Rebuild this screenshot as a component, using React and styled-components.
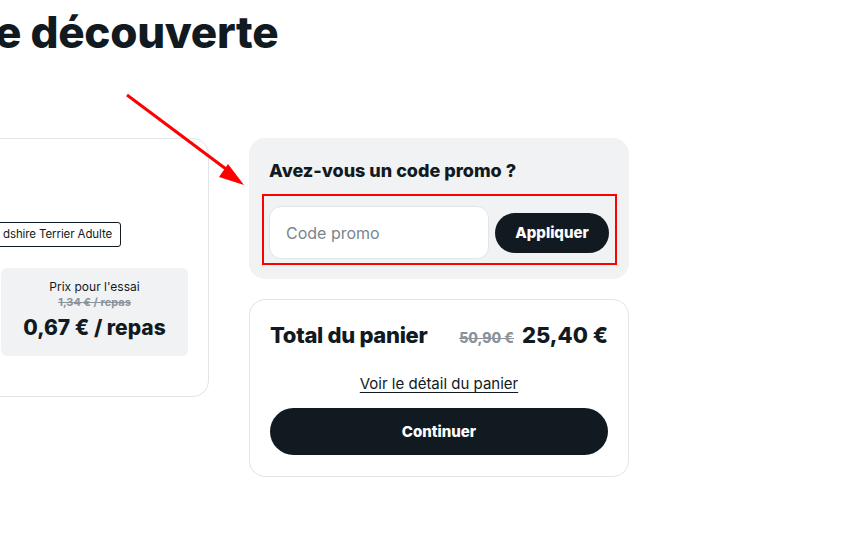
import styled, { createGlobalStyle } from "styled-components"

const GlobalStyle = createGlobalStyle`
    html, body {
        margin: 0;
        padding: 0;
        background: #ffffff;
        overflow: hidden;
    }
    body {
        font-family: "Inter", "Liberation Sans", sans-serif;
        color: #111a21;
    }
`

export default function App() {
    return (
        <>
            <GlobalStyle />
            <Page>
                <Title>e découverte</Title>
                <Columns>
                    <ProductCard>
                        <Tag>dshire Terrier Adulte</Tag>
                        <PriceBox>
                            <PriceLabel>Prix pour l'essai</PriceLabel>
                            <OldMealPrice>1,34 € / repas</OldMealPrice>
                            <MealPrice>0,67 € / repas</MealPrice>
                        </PriceBox>
                    </ProductCard>

                    <Side>
                        <PromoBox>
                            <PromoTitle>Avez-vous un code promo ?</PromoTitle>
                            <Highlight>
                                <PromoRow>
                                    <PromoInput placeholder="Code promo" />
                                    <PillButton $small>Appliquer</PillButton>
                                </PromoRow>
                            </Highlight>
                        </PromoBox>

                        <TotalCard>
                            <TotalRow>
                                <TotalLabel>Total du panier</TotalLabel>
                                <Prices>
                                    <OldTotal>50,90 €</OldTotal>
                                    <Total>25,40 €</Total>
                                </Prices>
                            </TotalRow>
                            <DetailLink href="#">Voir le détail du panier</DetailLink>
                            <PillButton>Continuer</PillButton>
                        </TotalCard>
                    </Side>
                </Columns>
            </Page>

            {/* flèche d'annotation */}
            <Arrow width="844" height="554" viewBox="0 0 844 554">
                <line x1="127" y1="95" x2="230" y2="172" stroke="#ff0000" strokeWidth="3" />
                <polygon points="244,185 228,164 219,177" fill="#ff0000" />
            </Arrow>
        </>
    )
}

const Page = styled.div`
    width: 844px;
    height: 554px;
    position: relative;
`

const Title = styled.h1`
    margin: 0 0 0 -5px;
    padding-top: 4px;
    font-size: 44px;
    line-height: 56px;
    font-weight: 800;
    letter-spacing: -0.3px;
    white-space: nowrap;
`

const Columns = styled.div`
    display: flex;
    align-items: flex-start;
    gap: 40px;
    margin-top: 78px;
`

const ProductCard = styled.div`
    margin-left: -20px;
    width: 187px;
    padding: 83px 20px 40px 20px;
    border: 1px solid #e1e4e8;
    border-radius: 16px;
    display: flex;
    flex-direction: column;
`

const Tag = styled.span`
    align-self: flex-start;
    margin-left: -8px;
    padding: 0 8px 0 9px;
    height: 23px;
    line-height: 23px;
    border: 1px solid #111a21;
    border-radius: 3px;
    font-size: 11.5px;
    letter-spacing: -0.1px;
    white-space: nowrap;
    margin-bottom: 21px;
`

const PriceBox = styled.div`
    height: 88px;
    background: #f1f2f4;
    border-radius: 6px;
    display: flex;
    flex-direction: column;
    align-items: center;
    padding-top: 11px;
    box-sizing: border-box;
`

const PriceLabel = styled.span`
    font-size: 12px;
    line-height: 16px;
`

const OldMealPrice = styled.span`
    font-size: 11px;
    line-height: 14px;
    font-weight: 700;
    color: #8a939c;
    text-decoration: line-through;
`

const MealPrice = styled.span`
    font-size: 21px;
    line-height: 28px;
    font-weight: 800;
    margin-top: 5px;
`

const Side = styled.div`
    width: 380px;
    display: flex;
    flex-direction: column;
    gap: 20px;
`

const PromoBox = styled.div`
    background: #f1f2f4;
    border-radius: 16px;
    padding: 20px 20px 14px 20px;
`

const PromoTitle = styled.h2`
    margin: 0 0 10px 0;
    font-size: 18px;
    line-height: 26px;
    font-weight: 800;
`

const Highlight = styled.div`
    margin: 0 -8px 0 -7px;
    border: 2px solid #ff0000;
    padding: 10px 6px 4px 5px;
`

const PromoRow = styled.div`
    display: flex;
    align-items: center;
    gap: 6px;
`

const PromoInput = styled.input`
    flex: 1;
    min-width: 0;
    height: 53px;
    box-sizing: border-box;
    border: 1px solid #e1e4e8;
    border-radius: 12px;
    background: #ffffff;
    padding: 0 16px;
    font-family: inherit;
    font-size: 16px;
    color: #111a21;
    outline: none;

    &::placeholder {
        color: #7b848c;
    }
`

const PillButton = styled.button`
    height: ${(p) => (p.$small ? "40px" : "47px")};
    width: ${(p) => (p.$small ? "114px" : "100%")};
    border: none;
    border-radius: 24px;
    background: #111a21;
    color: #ffffff;
    font-family: inherit;
    font-size: 15px;
    font-weight: 800;
    cursor: pointer;
`

const TotalCard = styled.div`
    border: 1px solid #e1e4e8;
    border-radius: 16px;
    padding: 20px 20px 21px 20px;
    display: flex;
    flex-direction: column;
    align-items: center;
`

const TotalRow = styled.div`
    width: 100%;
    height: 30px;
    display: flex;
    align-items: center;
    justify-content: space-between;
`

const TotalLabel = styled.span`
    font-size: 22px;
    font-weight: 800;
    letter-spacing: -0.3px;
`

const Prices = styled.div`
    display: flex;
    align-items: baseline;
    gap: 8px;
`

const OldTotal = styled.span`
    font-size: 14px;
    font-weight: 800;
    color: #8a939c;
    text-decoration: line-through;
`

const Total = styled.span`
    font-size: 22px;
    font-weight: 800;
`

const DetailLink = styled.a`
    margin-top: 24px;
    margin-bottom: 14px;
    font-size: 15px;
    line-height: 20px;
    color: #111a21;
    text-decoration: underline;
    text-underline-offset: 3px;
`

const Arrow = styled.svg`
    position: absolute;
    top: 0;
    left: 0;
    pointer-events: none;
`
